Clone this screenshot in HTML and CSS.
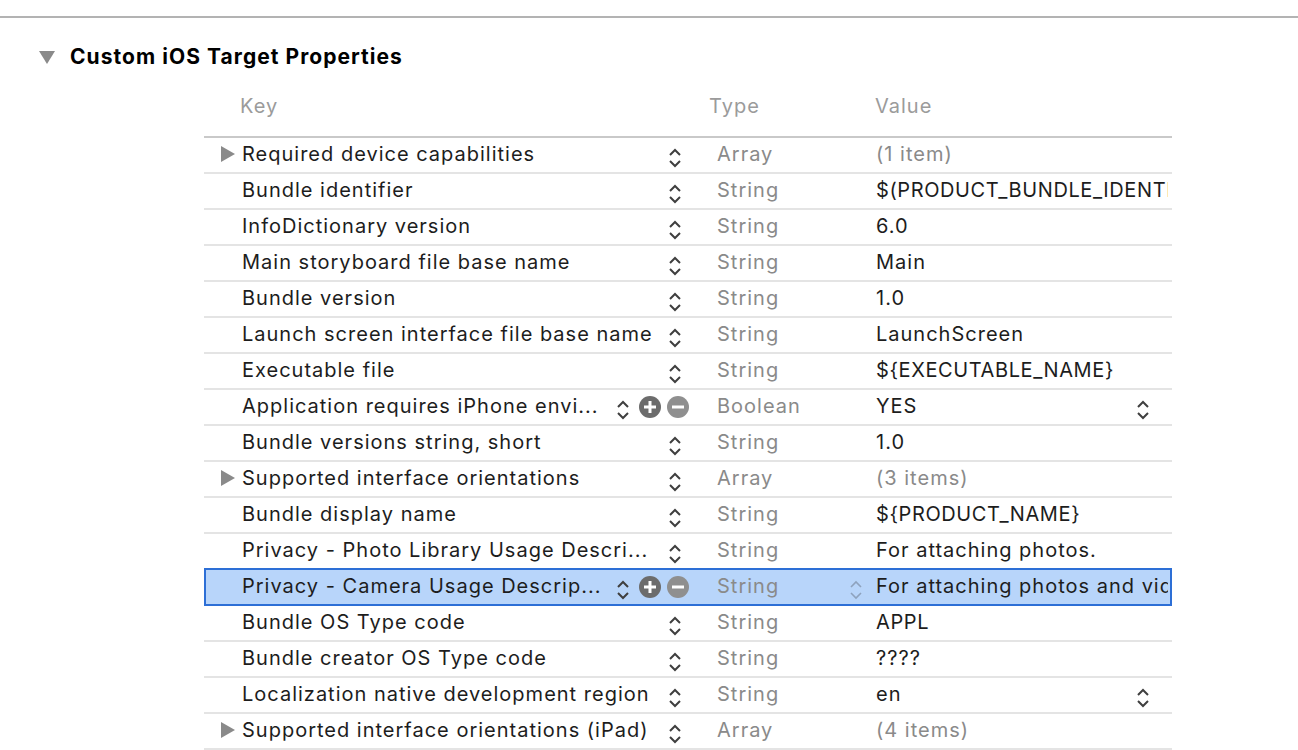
FILE: index.html
```html
<!DOCTYPE html>
<html lang="en">
<head>
<meta charset="utf-8">
<title>Custom iOS Target Properties</title>
<link rel="stylesheet" href="styles.css">
</head>
<body>
<div class="topline"></div>
<div class="section-head">
  <svg class="tri-down" width="16" height="13" viewBox="0 0 16 13"><polygon points="0,0 16,0 8,13" fill="#8a8a8a"/></svg>
  <h1>Custom iOS Target Properties</h1>
</div>
<div class="table">
  <div class="thead"><span></span><span>Key</span><span>Type</span><span>Value</span></div>

  <div class="row">
    <div class="disc"><svg width="14" height="16" viewBox="0 0 14 16"><polygon points="0,0 14,8 0,16" fill="#8a8a8a"/></svg></div>
    <div class="key"><span class="ktext">Required device capabilities</span><svg class="chev" width="14" height="22" viewBox="0 0 14 22"><polyline points="2,8 7,3 12,8"/><polyline points="2,14 7,19 12,14"/></svg></div>
    <div class="type"><span class="ttext">Array</span></div>
    <div class="val muted"><span class="vtext">(1 item)</span></div>
    <div></div>
  </div>

  <div class="row">
    <div class="disc"></div>
    <div class="key"><span class="ktext">Bundle identifier</span><svg class="chev" width="14" height="22" viewBox="0 0 14 22"><polyline points="2,8 7,3 12,8"/><polyline points="2,14 7,19 12,14"/></svg></div>
    <div class="type"><span class="ttext">String</span></div>
    <div class="val"><span class="vtext caps">$(PRODUCT_BUNDLE_IDENTIFIER)</span></div>
    <div></div>
  </div>

  <div class="row">
    <div class="disc"></div>
    <div class="key"><span class="ktext">InfoDictionary version</span><svg class="chev" width="14" height="22" viewBox="0 0 14 22"><polyline points="2,8 7,3 12,8"/><polyline points="2,14 7,19 12,14"/></svg></div>
    <div class="type"><span class="ttext">String</span></div>
    <div class="val"><span class="vtext">6.0</span></div>
    <div></div>
  </div>

  <div class="row">
    <div class="disc"></div>
    <div class="key"><span class="ktext">Main storyboard file base name</span><svg class="chev" width="14" height="22" viewBox="0 0 14 22"><polyline points="2,8 7,3 12,8"/><polyline points="2,14 7,19 12,14"/></svg></div>
    <div class="type"><span class="ttext">String</span></div>
    <div class="val"><span class="vtext">Main</span></div>
    <div></div>
  </div>

  <div class="row">
    <div class="disc"></div>
    <div class="key"><span class="ktext">Bundle version</span><svg class="chev" width="14" height="22" viewBox="0 0 14 22"><polyline points="2,8 7,3 12,8"/><polyline points="2,14 7,19 12,14"/></svg></div>
    <div class="type"><span class="ttext">String</span></div>
    <div class="val"><span class="vtext">1.0</span></div>
    <div></div>
  </div>

  <div class="row">
    <div class="disc"></div>
    <div class="key"><span class="ktext">Launch screen interface file base name</span><svg class="chev" width="14" height="22" viewBox="0 0 14 22"><polyline points="2,8 7,3 12,8"/><polyline points="2,14 7,19 12,14"/></svg></div>
    <div class="type"><span class="ttext">String</span></div>
    <div class="val"><span class="vtext">LaunchScreen</span></div>
    <div></div>
  </div>

  <div class="row">
    <div class="disc"></div>
    <div class="key"><span class="ktext">Executable file</span><svg class="chev" width="14" height="22" viewBox="0 0 14 22"><polyline points="2,8 7,3 12,8"/><polyline points="2,14 7,19 12,14"/></svg></div>
    <div class="type"><span class="ttext">String</span></div>
    <div class="val"><span class="vtext caps">${EXECUTABLE_NAME}</span></div>
    <div></div>
  </div>

  <div class="row">
    <div class="disc"></div>
    <div class="key edit"><span class="ktext">Application requires iPhone envi...</span><svg class="chev" width="14" height="22" viewBox="0 0 14 22"><polyline points="2,8 7,3 12,8"/><polyline points="2,14 7,19 12,14"/></svg><svg class="btn plus" width="22" height="22" viewBox="0 0 22 22"><circle cx="11" cy="11" r="11"/><rect x="5" y="9.5" width="12" height="3" fill="#fff"/><rect x="9.5" y="5" width="3" height="12" fill="#fff"/></svg><svg class="btn minus" width="22" height="22" viewBox="0 0 22 22"><circle cx="11" cy="11" r="11"/><rect x="5" y="9.5" width="12" height="3" fill="#fff"/></svg></div>
    <div class="type"><span class="ttext">Boolean</span></div>
    <div class="val"><span class="vtext">YES</span><svg class="chev vchev" width="14" height="22" viewBox="0 0 14 22"><polyline points="2,8 7,3 12,8"/><polyline points="2,14 7,19 12,14"/></svg></div>
    <div></div>
  </div>

  <div class="row">
    <div class="disc"></div>
    <div class="key"><span class="ktext">Bundle versions string, short</span><svg class="chev" width="14" height="22" viewBox="0 0 14 22"><polyline points="2,8 7,3 12,8"/><polyline points="2,14 7,19 12,14"/></svg></div>
    <div class="type"><span class="ttext">String</span></div>
    <div class="val"><span class="vtext">1.0</span></div>
    <div></div>
  </div>

  <div class="row">
    <div class="disc"><svg width="14" height="16" viewBox="0 0 14 16"><polygon points="0,0 14,8 0,16" fill="#8a8a8a"/></svg></div>
    <div class="key"><span class="ktext">Supported interface orientations</span><svg class="chev" width="14" height="22" viewBox="0 0 14 22"><polyline points="2,8 7,3 12,8"/><polyline points="2,14 7,19 12,14"/></svg></div>
    <div class="type"><span class="ttext">Array</span></div>
    <div class="val muted"><span class="vtext">(3 items)</span></div>
    <div></div>
  </div>

  <div class="row">
    <div class="disc"></div>
    <div class="key"><span class="ktext">Bundle display name</span><svg class="chev" width="14" height="22" viewBox="0 0 14 22"><polyline points="2,8 7,3 12,8"/><polyline points="2,14 7,19 12,14"/></svg></div>
    <div class="type"><span class="ttext">String</span></div>
    <div class="val"><span class="vtext caps">${PRODUCT_NAME}</span></div>
    <div></div>
  </div>

  <div class="row">
    <div class="disc"></div>
    <div class="key"><span class="ktext">Privacy - Photo Library Usage Descri...</span><svg class="chev" width="14" height="22" viewBox="0 0 14 22"><polyline points="2,8 7,3 12,8"/><polyline points="2,14 7,19 12,14"/></svg></div>
    <div class="type"><span class="ttext">String</span></div>
    <div class="val"><span class="vtext">For attaching photos.</span></div>
    <div></div>
  </div>

  <div class="row sel">
    <div class="disc"></div>
    <div class="key edit"><span class="ktext">Privacy - Camera Usage Descrip...</span><svg class="chev" width="14" height="22" viewBox="0 0 14 22"><polyline points="2,8 7,3 12,8"/><polyline points="2,14 7,19 12,14"/></svg><svg class="btn plus" width="22" height="22" viewBox="0 0 22 22"><circle cx="11" cy="11" r="11"/><rect x="5" y="9.5" width="12" height="3" fill="#fff"/><rect x="9.5" y="5" width="3" height="12" fill="#fff"/></svg><svg class="btn minus" width="22" height="22" viewBox="0 0 22 22"><circle cx="11" cy="11" r="11"/><rect x="5" y="9.5" width="12" height="3" fill="#fff"/></svg></div>
    <div class="type"><span class="ttext">String</span><svg class="chev tchev" width="14" height="22" viewBox="0 0 14 22"><polyline points="2,8 7,3 12,8"/><polyline points="2,14 7,19 12,14"/></svg></div>
    <div class="val"><span class="vtext">For attaching photos and videos.</span></div>
    <div></div>
  </div>

  <div class="row">
    <div class="disc"></div>
    <div class="key"><span class="ktext">Bundle OS Type code</span><svg class="chev" width="14" height="22" viewBox="0 0 14 22"><polyline points="2,8 7,3 12,8"/><polyline points="2,14 7,19 12,14"/></svg></div>
    <div class="type"><span class="ttext">String</span></div>
    <div class="val"><span class="vtext caps">APPL</span></div>
    <div></div>
  </div>

  <div class="row">
    <div class="disc"></div>
    <div class="key"><span class="ktext">Bundle creator OS Type code</span><svg class="chev" width="14" height="22" viewBox="0 0 14 22"><polyline points="2,8 7,3 12,8"/><polyline points="2,14 7,19 12,14"/></svg></div>
    <div class="type"><span class="ttext">String</span></div>
    <div class="val"><span class="vtext">????</span></div>
    <div></div>
  </div>

  <div class="row">
    <div class="disc"></div>
    <div class="key"><span class="ktext">Localization native development region</span><svg class="chev" width="14" height="22" viewBox="0 0 14 22"><polyline points="2,8 7,3 12,8"/><polyline points="2,14 7,19 12,14"/></svg></div>
    <div class="type"><span class="ttext">String</span></div>
    <div class="val"><span class="vtext">en</span><svg class="chev vchev" width="14" height="22" viewBox="0 0 14 22"><polyline points="2,8 7,3 12,8"/><polyline points="2,14 7,19 12,14"/></svg></div>
    <div></div>
  </div>

  <div class="row">
    <div class="disc"><svg width="14" height="16" viewBox="0 0 14 16"><polygon points="0,0 14,8 0,16" fill="#8a8a8a"/></svg></div>
    <div class="key"><span class="ktext">Supported interface orientations (iPad)</span><svg class="chev" width="14" height="22" viewBox="0 0 14 22"><polyline points="2,8 7,3 12,8"/><polyline points="2,14 7,19 12,14"/></svg></div>
    <div class="type"><span class="ttext">Array</span></div>
    <div class="val muted"><span class="vtext">(4 items)</span></div>
    <div></div>
  </div>
</div>
</body>
</html>
```

FILE: styles.css
```css
html, body {
  margin: 0;
  background: #ffffff;
  overflow: hidden;
}

body {
  font-family: Inter, "Liberation Sans", "DejaVu Sans", sans-serif;
  color: #1d1d1d;
}

.topline {
  height: 2px;
  background: #b3b3b3;
  margin-top: 16px;
}

.section-head {
  display: flex;
  align-items: center;
  gap: 15px;
  padding-left: 39px;
  margin-top: 24px;
  height: 28px;
}

.section-head h1 {
  margin: 0;
  font-size: 21px;
  font-weight: 700;
  color: #000;
  letter-spacing: 1.05px;
}

.tri-down {
  margin-top: 2px;
}

.table {
  margin: 18px 0 0 204px;
  width: 968px;
}

.thead {
  display: grid;
  grid-template-columns: 36px 469px 166px 1fr;
  height: 50px;
  box-sizing: border-box;
  border-bottom: 2px solid #c9c9c9;
  padding-top: 5px;
  color: #9b9b9b;
  font-size: 20px;
  line-height: 26px;
  letter-spacing: 1px;
}

.row {
  display: grid;
  grid-template-columns: 38px 458px 176px 292px 4px;
  height: 36px;
  box-sizing: border-box;
  border-bottom: 2px solid #e4e4e4;
  font-size: 20px;
  line-height: 32px;
  letter-spacing: 1px;
}

.row.sel {
  background: #b8d5fa;
  border-bottom-color: #2d6fd6;
  box-shadow: inset 2px 0 0 #2d6fd6, inset -2px 0 0 #2d6fd6, 0 -2px 0 #2d6fd6;
}

.disc {
  display: flex;
  align-items: center;
  padding-left: 17px;
  padding-bottom: 2px;
}

.key {
  display: flex;
  align-items: center;
  min-width: 0;
  padding-right: 18px;
}

.key.edit {
  padding-right: 11px;
}

.ktext, .ttext, .vtext {
  padding-bottom: 2px;
  white-space: nowrap;
}

.vtext.caps {
  letter-spacing: 0.6px;
}

.ktext {
  flex: 1;
  min-width: 0;
  overflow: hidden;
  color: #1d1d1d;
}

.chev {
  flex: none;
  margin-top: 6px;
  fill: none;
  stroke: #3f3f3f;
  stroke-width: 2;
}

.key.edit .chev {
  margin-right: 9px;
}

.btn {
  flex: none;
}

.btn.plus {
  fill: #6c6c6c;
  margin-right: 6px;
}

.btn.minus {
  fill: #8f8f8f;
}

.type {
  display: flex;
  align-items: center;
  padding-left: 17px;
  padding-right: 13px;
  color: #8a8a8a;
}

.type .tchev {
  margin-left: auto;
  stroke: #8ea2bd;
  stroke-width: 1.6;
}

.val {
  display: flex;
  align-items: center;
  overflow: hidden;
  color: #1d1d1d;
}

.val.muted {
  color: #8a8a8a;
}

.vchev {
  margin-left: auto;
  margin-right: 18px;
}
```
